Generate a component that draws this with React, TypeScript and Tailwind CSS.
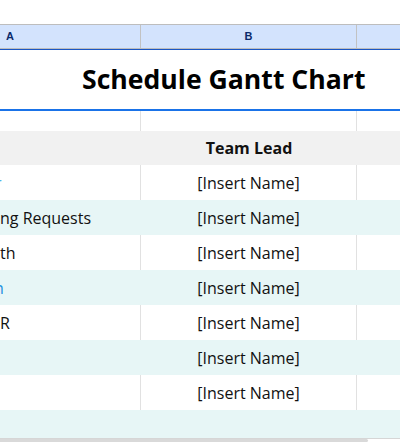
const rows = [
  { a: "r", aShift: -5, aColor: "text-[#4fb3e8]", band: false },
  { a: "ng Requests", aShift: 0, aColor: "text-[#111]", band: true },
  { a: "th", aShift: 0, aColor: "text-[#111]", band: false },
  { a: "n", aShift: -6, aColor: "text-[#1e90e0]", band: true },
  { a: "R", aShift: 0, aColor: "text-[#111]", band: false },
  { a: "", aShift: 0, aColor: "text-[#111]", band: true },
  { a: "", aShift: 0, aColor: "text-[#111]", band: false },
];

function Cells({
  band,
  children,
  a,
}: {
  band: boolean;
  children?: React.ReactNode;
  a?: React.ReactNode;
}) {
  const line = band ? "border-transparent" : "border-[#e1e1e1]";
  return (
    <div
      className={`grid grid-cols-[141px_216px_1fr] h-[35px] ${
        band ? "bg-[#e7f6f6]" : "bg-white"
      }`}
    >
      <div className={`border-r ${line} overflow-hidden flex items-center`}>{a}</div>
      <div className={`border-r ${line} flex items-center justify-center`}>{children}</div>
      <div />
    </div>
  );
}

export default function App() {
  return (
    <div
      className="w-[400px] h-[443px] overflow-hidden bg-white relative"
      style={{ fontFamily: '"Open Sans", "Noto Sans", sans-serif' }}
    >
      <div className="h-[24px]" />

      {/* column letters */}
      <div className="grid grid-cols-[141px_216px_1fr] h-[25px] bg-[#d3e3fd] border-t border-[#bdbdbd] border-b border-b-[#bdbdbd]">
        <div
          className="border-r border-[#c2c2c2] flex items-center pl-[6px] text-[11px] font-bold text-[#0b2a6b]"
          style={{ fontFamily: '"Liberation Sans", Arial, sans-serif' }}
        >
          A
        </div>
        <div
          className="border-r border-[#c2c2c2] flex items-center justify-center text-[11px] font-bold text-[#0b2a6b]"
          style={{ fontFamily: '"Liberation Sans", Arial, sans-serif' }}
        >
          B
        </div>
        <div />
      </div>
      <div className="h-[1px] bg-[#1a56c4]" />

      {/* title */}
      <div className="h-[61px] flex items-center pl-[82px] border-b-2 border-[#1a73e8]">
        <span className="text-[26.6px] font-bold text-black">Schedule Gantt Chart</span>
      </div>

      {/* empty row */}
      <div className="grid grid-cols-[141px_216px_1fr] h-[20px]">
        <div className="border-r border-[#e1e1e1]" />
        <div className="border-r border-[#e1e1e1]" />
        <div />
      </div>

      {/* header row */}
      <div className="h-[34px] bg-[#f1f1f1] grid grid-cols-[141px_216px_1fr]">
        <div />
        <div className="flex items-center justify-center text-[16px] font-bold text-[#111]">
          Team Lead
        </div>
        <div />
      </div>

      {rows.map((r, i) => (
        <Cells
          key={i}
          band={r.band}
          a={
            r.a ? (
              <span
                className={`text-[16px] whitespace-nowrap ${r.aColor}`}
                style={{ marginLeft: r.aShift }}
              >
                {r.a}
              </span>
            ) : null
          }
        >
          <span className="text-[16px] text-[#111]">[Insert Name]</span>
        </Cells>
      ))}

      <div className="h-[29px] bg-[#e7f6f6] border-b border-[#d6d6d6]" />
      <div className="h-[3px] w-[368px] bg-[#d9d9d9] rounded-r" />
    </div>
  );
}
